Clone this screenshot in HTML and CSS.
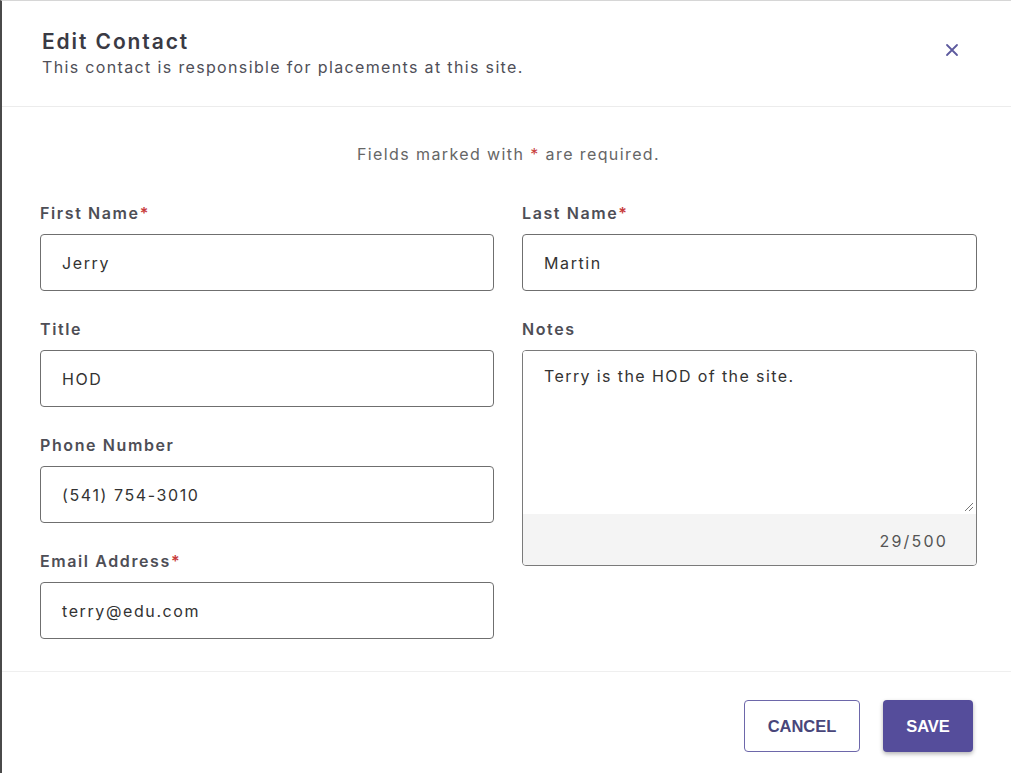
FILE: index.html
```html
<!DOCTYPE html>
<html lang="en">
<head>
<meta charset="utf-8">
<title>Edit Contact</title>
<link rel="stylesheet" href="styles.css">
</head>
<body>
<div class="dialog">
  <header class="dlg-header">
    <div class="dlg-titles">
      <h1 class="dlg-title">Edit Contact</h1>
      <p class="dlg-sub">This contact is responsible for placements at this site.</p>
    </div>
    <button class="close-btn" aria-label="Close">
      <svg width="14" height="14" viewBox="0 0 14 14"><path d="M2 2 L12 12 M12 2 L2 12" stroke="#5d5a9e" stroke-width="1.8" stroke-linecap="round" fill="none"/></svg>
    </button>
  </header>
  <section class="dlg-body">
    <p class="req-note">Fields marked with <span class="star">*</span> are required.</p>
    <div class="form-grid">
      <div class="col">
        <div class="field">
          <label class="lbl">First Name<span class="star">*</span></label>
          <div class="input">Jerry</div>
        </div>
        <div class="field">
          <label class="lbl">Title</label>
          <div class="input">HOD</div>
        </div>
        <div class="field">
          <label class="lbl">Phone Number</label>
          <div class="input">(541) 754-3010</div>
        </div>
        <div class="field">
          <label class="lbl">Email Address<span class="star">*</span></label>
          <div class="input">terry@edu.com</div>
        </div>
      </div>
      <div class="col">
        <div class="field">
          <label class="lbl">Last Name<span class="star">*</span></label>
          <div class="input">Martin</div>
        </div>
        <div class="field">
          <label class="lbl">Notes</label>
          <div class="textarea-box">
            <div class="textarea">Terry is the HOD of the site.
              <svg class="grip" width="12" height="12" viewBox="0 0 12 12"><path d="M11 3 L3 11 M11 7 L7 11" stroke="#777" stroke-width="1" fill="none"/></svg>
            </div>
            <div class="counter">29/500</div>
          </div>
        </div>
      </div>
    </div>
  </section>
  <footer class="dlg-footer">
    <button class="btn btn-outline">CANCEL</button>
    <button class="btn btn-primary">SAVE</button>
  </footer>
</div>
</body>
</html>
```

FILE: styles.css
```css
html, body {
  margin: 0;
  padding: 0;
  background: #ffffff;
}
body {
  font-family: Inter, "Noto Sans", "Liberation Sans", sans-serif;
  color: #333;
  height: 774px;
  overflow: hidden;
}
.dialog {
  border-left: 2px solid #4a4a4a;
  border-top: 1px solid #d6d6d6;
  height: 773px;
  box-sizing: border-box;
  background: #fff;
}
.dlg-header {
  display: flex;
  justify-content: space-between;
  align-items: flex-start;
  padding: 29px 52px 0 40px;
  height: 106px;
  box-sizing: border-box;
  border-bottom: 1px solid #ececec;
}
.dlg-title {
  margin: 0;
  font-size: 21px;
  line-height: 24px;
  font-weight: 600;
  letter-spacing: 1.9px;
  color: #3a3a44;
}
.dlg-sub {
  margin: 3px 0 0;
  font-size: 16px;
  line-height: 20px;
  letter-spacing: 1.35px;
  color: #4f4f58;
}
.close-btn {
  border: none;
  background: none;
  padding: 0;
  margin-top: 13px;
  width: 14px;
  height: 14px;
  display: flex;
}
.dlg-body {
  padding: 37px 34px 32px 38px;
  border-bottom: 1px solid #efefef;
}
.req-note {
  margin: 0 0 39px;
  text-align: center;
  font-size: 16px;
  line-height: 20px;
  letter-spacing: 1.4px;
  color: #666;
}
.star {
  color: #c83c3c;
}
.form-grid {
  display: grid;
  grid-template-columns: 454px 455px;
  column-gap: 28px;
}
.col {
  display: flex;
  flex-direction: column;
  gap: 28px;
}
.field {
  display: flex;
  flex-direction: column;
}
.lbl {
  font-size: 16px;
  line-height: 20px;
  font-weight: 600;
  letter-spacing: 1.6px;
  color: #4e4e56;
  margin-bottom: 11px;
}
.input {
  height: 57px;
  box-sizing: border-box;
  border: 1px solid #6f6f6f;
  border-radius: 4px;
  padding: 0 21px;
  display: flex;
  align-items: center;
  font-size: 16px;
  letter-spacing: 1.6px;
  color: #333;
}
.textarea-box {
  height: 216px;
  box-sizing: border-box;
  border: 1px solid #7a7a7a;
  border-radius: 4px;
  display: flex;
  flex-direction: column;
  overflow: hidden;
}
.textarea {
  position: relative;
  height: 163px;
  padding: 15px 21px;
  box-sizing: border-box;
  font-size: 16px;
  line-height: 20px;
  letter-spacing: 1.4px;
  color: #333;
  background: #fff;
}
.grip {
  position: absolute;
  right: 2px;
  bottom: 2px;
}
.counter {
  flex: 1;
  background: #f4f4f4;
  display: flex;
  align-items: center;
  justify-content: flex-end;
  padding: 2px 28px 0 0;
  font-size: 16px;
  letter-spacing: 2.2px;
  color: #555;
}
.dlg-footer {
  display: flex;
  justify-content: flex-end;
  gap: 23px;
  padding: 28px 38px 0 0;
}
.btn {
  height: 52px;
  border-radius: 4px;
  font-family: "Liberation Sans", Arial, sans-serif;
  font-size: 16.5px;
  font-weight: 700;
  cursor: pointer;
  padding: 0;
}
.btn-outline {
  width: 116px;
  background: #fff;
  border: 1.5px solid #6d67aa;
  color: #48467a;
}
.btn-primary {
  width: 90px;
  background: #554d9b;
  border: none;
  color: #fff;
  box-shadow: 0 2px 4px rgba(0,0,0,0.3);
}
```
